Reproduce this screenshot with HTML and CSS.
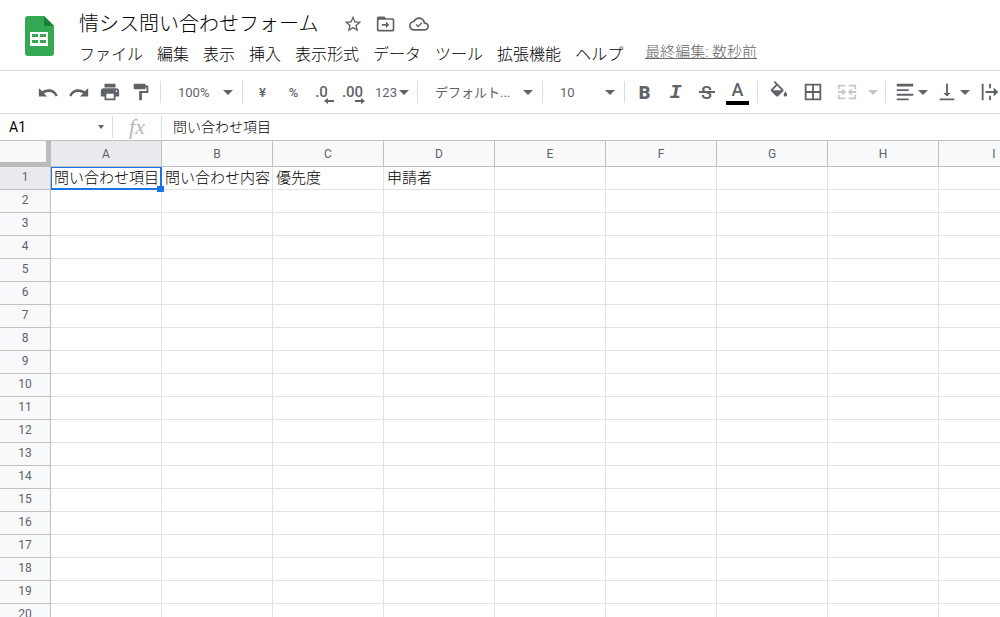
FILE: index.html
```html
<!DOCTYPE html>
<html lang="ja">

<head>
    <meta charset="UTF-8">
    <meta name="viewport" content="width=device-width, initial-scale=1.0">
    <title>情シス問い合わせフォーム</title>
    <link rel="stylesheet" href="styles.css">
</head>

<body>

    <header class="header">
        <svg class="logo" viewBox="0 0 29 40">
            <path fill="#34a853" d="M3 0h16l10 10v27a3 3 0 0 1-3 3H3a3 3 0 0 1-3-3V3a3 3 0 0 1 3-3z" />
            <path fill="#188038" d="M19 0l10 10H19z" />
            <path fill="#fff" fill-rule="evenodd" d="M5 16h18v14H5zM7 18v3h6v-3zM15 18v3h6v-3zM7 24v3h6v-3zM15 24v3h6v-3z" />
        </svg>
        <div class="heading">
            <div class="titleBar">
                <h1>情シス問い合わせフォーム</h1>
                <button class="titleBtn" aria-label="スター">
                    <svg viewBox="0 0 24 24"><path d="M22 9.24l-7.19-.62L12 2 9.19 8.63 2 9.24l5.46 4.73L5.82 21 12 17.27 18.18 21l-1.63-7.03L22 9.24zM12 15.4l-3.76 2.27 1-4.28-3.32-2.88 4.38-.38L12 6.1l1.71 4.04 4.38.38-3.32 2.88 1 4.28L12 15.4z" /></svg>
                </button>
                <button class="titleBtn" aria-label="移動">
                    <svg viewBox="0 0 24 24"><path d="M20 5h-8l-2-2H3c-1.1 0-2 .9-2 2v14c0 1.1.9 2 2 2h17c1.1 0 2-.9 2-2V7c0-1.1-.9-2-2-2zm0 14H3V7h17v12zM12 17l4-4-4-4v3H7v2h5z" /></svg>
                </button>
                <button class="titleBtn" aria-label="ドキュメントのステータス">
                    <svg viewBox="0 0 24 24"><path d="M19.35 10.04C18.67 6.59 15.64 4 12 4 9.11 4 6.6 5.64 5.35 8.04 2.34 8.36 0 10.91 0 14c0 3.31 2.69 6 6 6h13c2.76 0 5-2.24 5-5 0-2.64-2.05-4.78-4.65-4.96zM19 18H6c-2.21 0-4-1.79-4-4 0-2.05 1.53-3.76 3.56-3.97l1.07-.11.5-.95C8.08 7.14 9.94 6 12 6c2.62 0 4.88 1.86 5.39 4.43l.3 1.5 1.53.11c1.56.1 2.78 1.41 2.78 2.96 0 1.65-1.35 3-3 3zm-8-4.2l-1.8-1.8L8 13.2l3 3 5-5-1.2-1.2z" /></svg>
                </button>
            </div>
            <nav class="menu">
                <button>ファイル</button>
                <button>編集</button>
                <button>表示</button>
                <button>挿入</button>
                <button>表示形式</button>
                <button>データ</button>
                <button>ツール</button>
                <button>拡張機能</button>
                <button>ヘルプ</button>
                <a href="#" class="lastEdit">最終編集: 数秒前</a>
            </nav>
        </div>
    </header>

    <div class="toolbar">
        <button class="tool" aria-label="元に戻す">
            <svg viewBox="0 0 24 24"><path d="M13 9c-2.8 0-5.3.8-7.2 2.2L2 8v9h9l-3.4-3.4c1.4-1 3.3-1.6 5.4-1.6 3.4 0 6.2 1.8 7.2 4.8l2.3-.8C21.2 11.8 17.5 9 13 9z" /></svg>
        </button>
        <button class="tool" aria-label="やり直し">
            <svg viewBox="0 0 24 24"><path d="M11 9c2.8 0 5.3.8 7.2 2.2L22 8v9h-9l3.4-3.4c-1.4-1-3.3-1.6-5.4-1.6-3.4 0-6.2 1.8-7.2 4.8L1.500 16C2.800 11.800 6.500 9 11 9z" /></svg>
        </button>
        <button class="tool" aria-label="印刷">
            <svg viewBox="0 0 24 24"><path d="M19 8H5c-1.66 0-3 1.34-3 3v6h4v4h12v-4h4v-6c0-1.66-1.34-3-3-3zm-3 11H8v-5h8v5zm3-7c-.55 0-1-.45-1-1s.45-1 1-1 1 .45 1 1-.45 1-1 1zm-1-9H6v4h12V3z" /></svg>
        </button>
        <button class="tool" aria-label="書式を貼り付け">
            <svg viewBox="0 0 24 24"><path d="M5 3h11a1 1 0 0 1 1 1v1h3v8h-7v8h-3V11h8V7h-1v1a1 1 0 0 1-1 1H5a1 1 0 0 1-1-1V4a1 1 0 0 1 1-1z" /></svg>
        </button>
        <span class="divider"></span>
        <label class="picker">
            <select aria-label="ズーム">
                <option>100%</option>
            </select>
        </label>
        <span class="divider"></span>
        <button class="tool">¥</button>
        <button class="tool">%</button>
        <button class="tool decimal">.0
            <svg viewBox="0 0 10 6"><path d="M4 0v2h6v2H4v2L0 3z" /></svg>
        </button>
        <button class="tool decimal">.00
            <svg viewBox="0 0 10 6"><path d="M6 0v2H0v2h6v2l4-3z" /></svg>
        </button>
        <button class="tool drop">123<i class="arrow"></i></button>
        <span class="divider"></span>
        <label class="picker font">
            <select aria-label="フォント">
                <option>デフォルト...</option>
            </select>
        </label>
        <span class="divider"></span>
        <label class="picker">
            <select aria-label="フォント サイズ">
                <option>10</option>
            </select>
        </label>
        <span class="divider"></span>
        <button class="tool bold">B</button>
        <button class="tool italic">I</button>
        <button class="tool strike"><span>S</span></button>
        <button class="tool color"><span>A</span></button>
        <span class="divider"></span>
        <button class="tool wide" aria-label="塗りつぶしの色">
            <svg viewBox="0 0 24 24"><path d="M16.56 8.94L7.62 0 6.21 1.41l2.38 2.38-5.15 5.15c-.59.59-.59 1.54 0 2.12l5.5 5.5c.29.29.68.44 1.06.44s.77-.15 1.06-.44l5.5-5.5c.59-.58.59-1.53 0-2.12zM5.21 10L10 5.21 14.79 10H5.21zM19 11.5s-2 2.17-2 3.5c0 1.1.9 2 2 2s2-.9 2-2c0-1.33-2-3.500-2-3.500z" /></svg>
        </button>
        <button class="tool wide" aria-label="枠線">
            <svg viewBox="0 0 24 24"><path d="M3 3v18h18V3H3zm8 16H5v-6h6v6zm0-8H5V5h6v6zm8 8h-6v-6h6v6zm0-8h-6V5h6v6z" /></svg>
        </button>
        <button class="tool wide" aria-label="セルを結合" disabled>
            <svg viewBox="0 0 24 24"><path d="M2 4h8v2H4v3H2zM14 4h8v5h-2V6h-6zM2 15h2v3h6v2H2zM20 15h2v5h-8v-2h6zM2 11h5V8l4 4-4 4v-3H2zM22 11h-5V8l-4 4 4 4v-3h5z" /></svg>
        </button>
        <button class="tool more" aria-label="結合の種類" disabled><i class="arrow"></i></button>
        <span class="divider"></span>
        <button class="tool drop" aria-label="水平方向の配置">
            <svg viewBox="0 0 24 24"><path d="M3 3h18v3H3zM3 9h13v2H3zM3 14h18v2H3zM3 19h13v2H3z" /></svg>
            <i class="arrow"></i>
        </button>
        <button class="tool drop" aria-label="垂直方向の配置">
            <svg viewBox="0 0 24 24"><path d="M16 13h-3V3h-2v10H8l4 4 4-4zM4 19v2h16v-2H4z" /></svg>
            <i class="arrow"></i>
        </button>
        <button class="tool" aria-label="テキストを折り返す">
            <svg viewBox="0 0 24 24"><path d="M3 3h2v18H3zM11 3h2v5h-2zM11 16h2v5h-2zM7 11h9V7l5 5-5 5v-4H7z" /></svg>
        </button>
    </div>

    <div class="formulaBar">
        <input class="nameBox" type="text" value="A1" aria-label="名前ボックス">
        <i class="arrow small"></i>
        <span class="divider"></span>
        <span class="fx">fx</span>
        <span class="divider"></span>
        <input class="formula" type="text" value="問い合わせ項目" aria-label="数式バー">
    </div>

    <div class="sheet">
        <table>
            <thead>
                <tr>
                    <th class="corner"></th>
                </tr>
            </thead>
            <tbody></tbody>
        </table>
    </div>

    <script>
        let headRow = document.querySelector('thead tr');
        let body = document.querySelector('tbody');

        let columns = ['A', 'B', 'C', 'D', 'E', 'F', 'G', 'H', 'I'];
        let data = [['問い合わせ項目', '問い合わせ内容', '優先度', '申請者']];
        let rowCount = 20;

        columns.forEach(name => {
            let th = document.createElement('th');
            th.innerText = name;
            headRow.appendChild(th);
        });

        for (let i = 0; i < rowCount; i++) {
            let tr = document.createElement('tr');
            let th = document.createElement('th');
            th.innerText = i + 1;
            tr.appendChild(th);

            columns.forEach((name, j) => {
                let td = document.createElement('td');
                td.innerText = data[i] && data[i][j] ? data[i][j] : '';
                tr.appendChild(td);
            });
            body.appendChild(tr);
        }

        // active cell is A1
        headRow.children[1].classList.add('active');
        body.rows[0].cells[0].classList.add('active');
        body.rows[0].cells[1].classList.add('selected');
    </script>

</body>

</html>
```

FILE: styles.css
```css
* {
    margin: 0;
    padding: 0;
    box-sizing: border-box;
}

body {
    height: 100vh;
    display: flex;
    flex-direction: column;
    overflow: hidden;
    background-color: white;
    color: #000;
    font-family: Roboto, "Noto Sans CJK JP", sans-serif;
}

button,
input,
select {
    border: 0;
    outline: 0;
    background: none;
    color: inherit;
    font-family: inherit;
}

button {
    cursor: pointer;
    white-space: nowrap;
}

svg {
    display: block;
    flex: none;
    fill: currentColor;
}

/* header */

.header {
    display: flex;
    flex: none;
    height: 71px;
    padding: 8px 0 0 25px;
    border-bottom: 1px solid #dadce0;
}

.logo {
    width: 29px;
    height: 40px;
    margin-top: 8px;
}

.heading {
    margin-left: 25px;
}

.titleBar {
    display: flex;
    align-items: center;
    height: 31px;
    color: #5f6368;
}

.titleBar h1 {
    margin-right: 25px;
    font-size: 20px;
    font-weight: 300;
    line-height: 30px;
    color: #000;
    white-space: nowrap;
}

.titleBtn {
    margin-right: 13px;
}

.titleBtn svg {
    width: 20px;
    height: 20px;
}

.menu {
    display: flex;
    align-items: flex-start;
    gap: 14px;
    padding-top: 2px;
}

.menu button {
    font-size: 16px;
    font-weight: 300;
    line-height: 28px;
}

.lastEdit {
    margin-left: 8px;
    font-size: 15px;
    font-weight: 300;
    line-height: 22px;
    color: #666;
    white-space: nowrap;
}

/* toolbar */

.toolbar {
    display: flex;
    flex: none;
    align-items: center;
    height: 43px;
    padding-left: 32px;
    border-bottom: 1px solid #dadce0;
    color: #5f6368;
    overflow: hidden;
}

.divider {
    flex: none;
    width: 1px;
    height: 22px;
    margin: 0 4px;
    background-color: #dadce0;
}

.tool {
    position: relative;
    display: flex;
    flex: none;
    align-items: center;
    justify-content: center;
    width: 31px;
    height: 30px;
    font-size: 13px;
    font-weight: 500;
}

.tool svg {
    width: 22px;
    height: 22px;
}

.tool:disabled {
    color: #c4c6c8;
}

.wide {
    width: 34px;
}

.more {
    width: 17px;
}

.drop {
    gap: 2px;
    width: 42px;
    font-weight: 400;
}

.arrow {
    flex: none;
    border: 5px solid transparent;
    border-top-color: currentColor;
    border-bottom: 0;
}

.decimal {
    font-size: 15px;
    padding-right: 6px;
}

.decimal svg {
    position: absolute;
    right: 6px;
    bottom: 3px;
    width: 10px;
    height: 6px;
}

.bold {
    font-size: 18px;
    font-weight: 900;
}

.italic {
    font-family: "Liberation Mono", monospace;
    font-size: 20px;
    font-weight: 700;
    font-style: italic;
}

.strike {
    font-size: 18px;
    font-weight: 500;
}

.strike::after {
    content: "";
    position: absolute;
    top: 14px;
    left: 8px;
    width: 16px;
    height: 2px;
    background-color: currentColor;
}

.color span {
    width: 23px;
    border-bottom: 4px solid #000;
    font-size: 18px;
    line-height: 22px;
}

.picker {
    position: relative;
    flex: none;
    width: 73px;
}

.font {
    width: 116px;
}

.picker select {
    appearance: none;
    width: 100%;
    height: 30px;
    padding-left: 13px;
    font-size: 13px;
    cursor: pointer;
}

.picker::after {
    content: "";
    position: absolute;
    top: 13px;
    right: 5px;
    border: 5px solid transparent;
    border-top-color: currentColor;
    border-bottom: 0;
    pointer-events: none;
}

/* formula bar */

.formulaBar {
    display: flex;
    flex: none;
    align-items: center;
    height: 27px;
    border-bottom: 1px solid #c0c0c0;
}

.nameBox {
    width: 98px;
    padding-left: 9px;
    font-size: 14px;
}

.small {
    border-width: 4px 3px 0;
    margin-right: 4px;
    color: #5f6368;
}

.fx {
    width: 40px;
    font-family: "Liberation Serif", serif;
    font-size: 22px;
    font-style: italic;
    line-height: 24px;
    text-align: center;
    color: #b8b8b8;
}

.formula {
    flex: 1;
    padding: 0 0 3px 7px;
    font-size: 14px;
    font-weight: 300;
}

/* grid */

.sheet {
    flex: 1;
    min-height: 0;
    overflow: hidden;
}

table {
    border-spacing: 0;
}

th {
    min-width: 111px;
    height: 26px;
    border-right: 1px solid #c0c0c0;
    border-bottom: 1px solid #c0c0c0;
    background-color: #f8f9fa;
    font-size: 12px;
    font-weight: 400;
    line-height: 20px;
    color: #5f6368;
}

.corner,
tbody th {
    min-width: 51px;
}

th.corner {
    border-right: 5px solid #bcbcbc;
    border-bottom: 5px solid #bcbcbc;
}

th.active {
    background-color: #e8eaed;
}

td {
    height: 23px;
    padding-left: 3px;
    border-right: 1px solid #e2e3e3;
    border-bottom: 1px solid #e2e3e3;
    font-size: 15px;
    font-weight: 300;
    line-height: 22px;
    white-space: nowrap;
}

tbody th {
    height: 23px;
    padding-bottom: 2px;
}

.selected {
    position: relative;
}

.selected::before {
    content: "";
    position: absolute;
    inset: 0 -1px -1px 0;
    border: solid #1a73e8;
    border-width: 1px 2px 2px 1px;
}

.selected::after {
    content: "";
    position: absolute;
    right: -3px;
    bottom: -3px;
    width: 7px;
    height: 6px;
    background-color: #1a73e8;
}
```
